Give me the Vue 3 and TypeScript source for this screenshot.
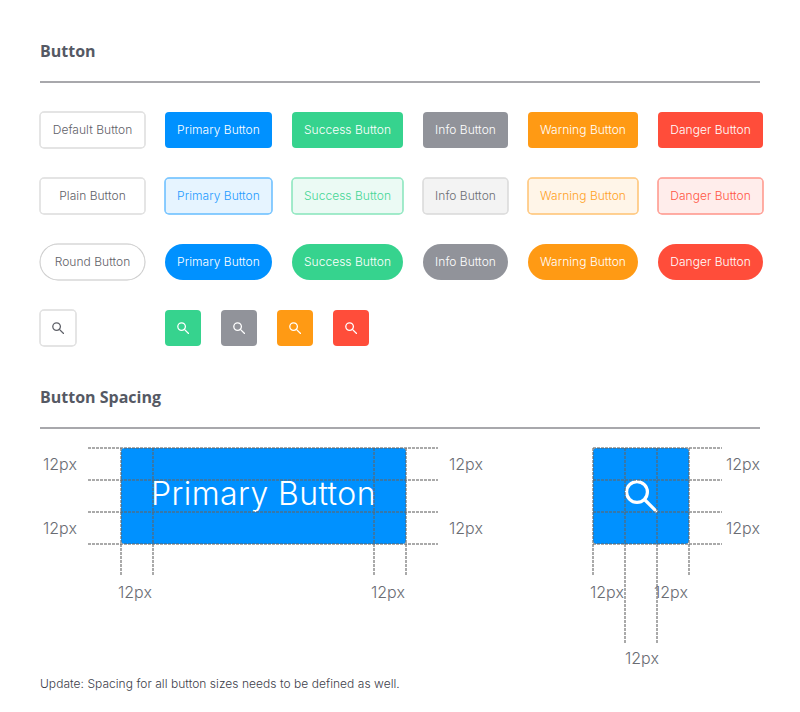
<template>
  <div class="page">
    <h2 class="section-title">Button</h2>
    <div class="rule"></div>

    <div class="btn-row top">
      <button class="btn default first">Default Button</button>
      <button v-for="b in kinds" :key="b.cls" class="btn" :class="b.cls">{{ b.label }}</button>
    </div>
    <div class="btn-row">
      <button class="btn default first">Plain Button</button>
      <button v-for="b in kinds" :key="b.cls" class="btn plain" :class="b.cls">{{ b.label }}</button>
    </div>
    <div class="btn-row">
      <button class="btn default round first">Round Button</button>
      <button v-for="b in kinds" :key="b.cls" class="btn round" :class="b.cls">{{ b.label }}</button>
    </div>
    <div class="btn-row">
      <div class="first">
        <button class="btn default icon">
          <svg class="search" viewBox="0 0 12 12"><circle cx="4.6" cy="4.6" r="3.8" /><path d="M7.4 7.4 12 12" /></svg>
        </button>
      </div>
      <button v-for="c in iconKinds" :key="c" class="btn icon" :class="c">
        <svg class="search" viewBox="0 0 12 12"><circle cx="4.6" cy="4.6" r="3.8" /><path d="M7.4 7.4 12 12" /></svg>
      </button>
    </div>

    <h2 class="section-title second">Button Spacing</h2>
    <div class="rule"></div>

    <div class="canvas">
      <div class="demo text-demo">Primary Button</div>
      <div class="demo icon-demo">
        <svg class="demo-search" viewBox="0 0 32 32"><circle cx="12" cy="12" r="10.4" /><path d="M19.5 19.5 32 32" /></svg>
      </div>

      <div v-for="y in hLines" :key="'l' + y" class="dash-h left-guides" :style="{ top: y + 'px' }"></div>
      <div v-for="y in hLines" :key="'r' + y" class="dash-h right-guides" :style="{ top: y + 'px' }"></div>
      <div v-for="x in vShort" :key="'v' + x" class="dash-v" :style="{ left: x + 'px', height: '128px' }"></div>
      <div v-for="x in vLong" :key="'i' + x" class="dash-v" :style="{ left: x + 'px', height: '196px' }"></div>

      <span
        v-for="(l, i) in labels"
        :key="i"
        class="measure"
        :style="{ left: l[0] + 'px', top: l[1] + 'px' }"
      >12px</span>
    </div>

    <p class="note">Update: Spacing for all button sizes needs to be defined as well.</p>
  </div>
</template>

<script setup lang="ts">
const kinds = [
  { cls: 'primary', label: 'Primary Button' },
  { cls: 'success', label: 'Success Button' },
  { cls: 'info', label: 'Info Button' },
  { cls: 'warning', label: 'Warning Button' },
  { cls: 'danger', label: 'Danger Button' }
]
const iconKinds = ['success', 'info', 'warning', 'danger']

// guide positions, relative to the canvas
const hLines = [0, 32, 64, 96]
const vShort = [81, 113, 334, 366, 553, 649]
const vLong = [585, 617]
const labels: [number, number][] = [
  [3, 6], [3, 70], [409, 6], [409, 70],
  [78, 134], [331, 134],
  [686, 6], [686, 70],
  [550, 134], [614, 134], [585, 200]
]
</script>

<style scoped>
.page {
  position: relative;
  width: 800px;
  height: 712px;
  box-sizing: border-box;
  padding: 40px 40px 0;
  font-family: Inter, "Liberation Sans", sans-serif;
  overflow: hidden;
}

.section-title {
  margin: 0;
  font-family: "Open Sans", "Liberation Sans", sans-serif;
  font-size: 16px;
  line-height: 22px;
  font-weight: 700;
  color: #555964;
}

.section-title.second {
  margin-top: 40px;
}

.rule {
  height: 2px;
  margin-top: 19px;
  background: #a8a8ac;
}

.btn-row {
  display: flex;
  gap: 20px;
  margin-top: 30px;
  width: 740px;
}

.btn-row.top {
  margin-top: 29px;
}

.first {
  width: 105px;
  flex: none;
}

.btn {
  box-sizing: border-box;
  flex: none;
  height: 36px;
  padding: 0;
  border: 0;
  border-radius: 4px;
  background: #fff;
  font-family: inherit;
  font-size: 12px;
  font-weight: 350;
  line-height: 16px;
  letter-spacing: 0.04px;
  color: #fff;
  white-space: nowrap;
}

.default {
  width: 105px;
  color: #5f6168;
  box-shadow: 0 0 0 0.75px #dcdcdc, inset 0 0 0 0.75px #dcdcdc;
}

.default.round {
  box-shadow: 0 0 0 0.5px #c4c4c4, inset 0 0 0 0.5px #c4c4c4;
}

.primary { width: 107px; background: #0091ff; }
.success { width: 111px; background: #36d38e; }
.info { width: 85px; background: #91939a; }
.warning { width: 110px; background: #ff9a14; }
.danger { width: 105px; background: #ff4d3a; }

.round { border-radius: 18px; }

.plain.primary { background: #e6f4ff; box-shadow: 0 0 0 0.75px #66bdff, inset 0 0 0 0.75px #66bdff; color: #1f9bff; }
.plain.success { background: #ebfaf4; box-shadow: 0 0 0 0.75px #86e5bb, inset 0 0 0 0.75px #86e5bb; color: #46d696; }
.plain.info { background: #f3f3f3; box-shadow: 0 0 0 0.75px #d9d9d9, inset 0 0 0 0.75px #d9d9d9; color: #6c6e75; }
.plain.warning { background: #fff5e8; box-shadow: 0 0 0 0.75px #ffc272, inset 0 0 0 0.75px #ffc272; color: #ffa126; }
.plain.danger { background: #ffedeb; box-shadow: 0 0 0 0.75px #ff9489, inset 0 0 0 0.75px #ff9489; color: #ff5644; }

.btn.icon {
  width: 36px;
  display: flex;
  align-items: center;
  justify-content: center;
}

.search {
  width: 12px;
  height: 12px;
  fill: none;
  stroke: currentColor;
  stroke-width: 1.3;
}

.canvas {
  position: relative;
  height: 240px;
  margin-top: 19px;
}

.demo {
  position: absolute;
  top: 0;
  height: 96px;
  border-radius: 4px;
  background: #0091ff;
  color: #fff;
  display: flex;
  align-items: center;
  justify-content: center;
}

.text-demo {
  left: 81px;
  width: 285px;
  padding-bottom: 6px;
  box-sizing: border-box;
  font-size: 32px;
  font-weight: 300;
  letter-spacing: 0.4px;
}

.icon-demo {
  left: 553px;
  width: 96px;
}

.demo-search {
  width: 32px;
  height: 32px;
  fill: none;
  stroke: #fff;
  stroke-width: 3.2;
  overflow: visible;
}

.dash-h {
  position: absolute;
  height: 2px;
  margin-top: -1px;
  background: repeating-linear-gradient(90deg, rgba(100, 100, 100, 0.55) 0 3px, transparent 3px 4px);
}

.left-guides { left: 48px; width: 350px; }
.right-guides { left: 553px; width: 129px; }

.dash-v {
  position: absolute;
  top: 0;
  width: 2px;
  margin-left: -1px;
  background: repeating-linear-gradient(180deg, rgba(100, 100, 100, 0.55) 0 3px, transparent 3px 4px);
}

.measure {
  position: absolute;
  font-size: 16px;
  line-height: 20px;
  font-weight: 300;
  color: #6a6c73;
}

.note {
  position: absolute;
  left: 40px;
  top: 676px;
  margin: 0;
  font-size: 12px;
  line-height: 16px;
  font-weight: 300;
  letter-spacing: 0.04px;
  color: #3d404a;
}
</style>
